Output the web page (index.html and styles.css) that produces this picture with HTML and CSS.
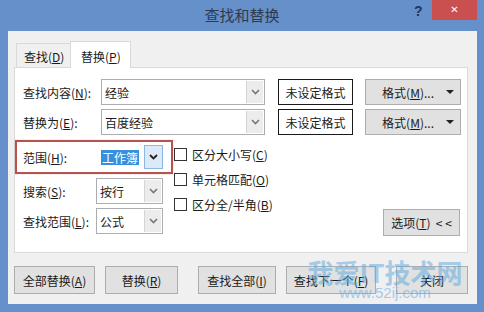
FILE: index.html
```html
<!DOCTYPE html>
<html>
<head>
<meta charset="utf-8" />
<title>查找和替换</title>
<link rel="stylesheet" href="styles.css">
</head>
<body>
<div id="win">

<div class="titlebar">
  <span class="title">查找和替换</span>
  <span class="help">?</span>
  <span class="close">&#x2715;</span>
</div>

<div class="dlg">

  <div class="tabs">
    <div class="tab">查找(<u>D</u>)</div>
    <div class="tab tab_on">替换(<u>P</u>)</div>
  </div>

  <div class="panel">
    <div class="row">
      <span class="lbl">查找内容(<u>N</u>):</span>
      <div class="combo combo_wide"><span class="val">经验</span><span class="arr"><svg width="9" height="6" viewBox="0 0 9 6"><path d="M1 1 L4.5 4.5 L8 1" fill="none" stroke="#777" stroke-width="1.6"/></svg></span></div>
      <div class="fmt_box">未设定格式</div>
      <div class="btn fmt_btn">格式(<u>M</u>)... <span class="tri"></span></div>
    </div>
    <div class="row">
      <span class="lbl">替换为(<u>E</u>):</span>
      <div class="combo combo_wide"><span class="val">百度经验</span><span class="arr"><svg width="9" height="6" viewBox="0 0 9 6"><path d="M1 1 L4.5 4.5 L8 1" fill="none" stroke="#777" stroke-width="1.6"/></svg></span></div>
      <div class="fmt_box">未设定格式</div>
      <div class="btn fmt_btn">格式(<u>M</u>)... <span class="tri"></span></div>
    </div>

    <div class="lower">
      <div class="opts_left">
        <div class="mark">
          <span class="lbl2">范围(<u>H</u>):</span>
          <div class="combo combo_small"><span class="val"><span class="sel">工作簿</span></span><span class="arr arr_hot"><svg width="9" height="6" viewBox="0 0 9 6"><path d="M1 1 L4.5 4.5 L8 1" fill="none" stroke="#222" stroke-width="1.8"/></svg></span></div>
        </div>
        <div class="row2">
          <span class="lbl2">搜索(<u>S</u>):</span>
          <div class="combo combo_small"><span class="val">按行</span><span class="arr"><svg width="9" height="6" viewBox="0 0 9 6"><path d="M1 1 L4.5 4.5 L8 1" fill="none" stroke="#777" stroke-width="1.6"/></svg></span></div>
        </div>
        <div class="row2">
          <span class="lbl2">查找范围(<u>L</u>):</span>
          <div class="combo combo_small"><span class="val">公式</span><span class="arr"><svg width="9" height="6" viewBox="0 0 9 6"><path d="M1 1 L4.5 4.5 L8 1" fill="none" stroke="#777" stroke-width="1.6"/></svg></span></div>
        </div>
      </div>
      <div class="checks">
        <div class="chk"><span class="box"></span>区分大小写(<u>C</u>)</div>
        <div class="chk"><span class="box"></span>单元格匹配(<u>O</u>)</div>
        <div class="chk"><span class="box"></span>区分全/半角(<u>B</u>)</div>
      </div>
      <div class="btn opt_btn">选项(<u>T</u>)&nbsp; &lt; &lt;</div>
    </div>
  </div>

  <div class="bottom">
    <div class="btn b_all">全部替换(<u>A</u>)</div>
    <div class="btn b_rep">替换(<u>R</u>)</div>
    <div class="btn b_findall">查找全部(<u>I</u>)</div>
    <div class="btn b_next">查找下一个(<u>F</u>)</div>
    <div class="btn b_close">关闭</div>
  </div>

</div><!--dlg end-->

<div class="wm">
  <div class="wm_big">我爱IT技术网</div>
  <div class="wm_small">www.52ij.com</div>
</div>

</div><!--win end-->
</body>
</html>
```

FILE: styles.css
```css
body{
	margin:0;
	font-family:"Noto Sans CJK SC", sans-serif;
	font-size:12px;
	color:#1a1a1a;
}
#win{
	position:relative;
	width:484px;
	height:312px;
	background-color:#6690c9;
	overflow:hidden;
}
.titlebar{
	height:31px;
	position:relative;
}
.title{
	position:absolute;
	left:0;
	right:0;
	top:4px;
	text-align:center;
	font-size:15px;
	color:#2e3a4e;
}
.help{
	position:absolute;
	left:414px;
	top:3px;
	font-family:"Liberation Sans", sans-serif;
	font-weight:bold;
	font-size:14px;
	color:#1d3561;
}
.close{
	position:absolute;
	left:432px;
	top:0;
	width:45px;
	height:20px;
	background-color:#c9504e;
	color:#fff;
	font-size:10px;
	line-height:20px;
	text-align:center;
	font-family:"DejaVu Sans", sans-serif;
}
.dlg{
	margin-left:8px;
	width:469px;
	height:273px;
	background-color:#f0f0f0;
	padding-top:9px;
	box-sizing:border-box;
}
.tabs{
	display:flex;
	align-items:flex-end;
	height:27px;
	margin-left:8px;
}
.tab{
	height:24px;
	width:55px;
	border:1px solid #d9d9d9;
	border-bottom:none;
	background-color:#f0f0f0;
	display:flex;
	align-items:center;
	padding-left:7px;
	box-sizing:border-box;
	padding-top:2px;
}
.tab_on{
	height:27px;
	width:61px;
	background-color:#fff;
	margin-left:-1px;
	padding-left:10px;
	margin-bottom:-1px;
	position:relative;
}
.panel{
	margin-left:6px;
	width:454px;
	height:186px;
	background-color:#fff;
	border:1px solid #d9d9d9;
	box-sizing:border-box;
	padding-top:11px;
}
.row{
	display:flex;
	align-items:center;
	height:26px;
	margin-bottom:4px;
}
.lbl{
	width:78px;
	padding-left:8px;
}
.combo{
	display:flex;
	height:26px;
	border:1px solid #abadb3;
	box-sizing:border-box;
	background-color:#fff;
}
.combo .val{
	flex:1;
	display:flex;
	align-items:center;
	padding-left:3px;
}
.arr{
	width:16px;
	border-left:1px solid #d5d5d5;
	background-color:#ececec;
	display:flex;
	align-items:center;
	justify-content:center;
	margin:1px;
}
.arr_hot{
	background-color:#dce9f7;
	border:1px solid #8cb6e3;
	margin:0;
	width:17px;
}
.combo_wide{
	width:164px;
}
.fmt_box{
	width:75px;
	height:26px;
	margin-left:13px;
	border:1px solid #1a1a1a;
	box-sizing:border-box;
	display:flex;
	align-items:center;
	justify-content:center;
}
.btn{
	background-color:#e1e1e1;
	border:1px solid #adadad;
	box-sizing:border-box;
	display:flex;
	align-items:center;
	justify-content:center;
}
.fmt_btn{
	width:96px;
	height:26px;
	margin-left:12px;
	justify-content:flex-end;
	padding-right:6px;
}
.tri{
	display:inline-block;
	width:0;
	height:0;
	border-left:4px solid transparent;
	border-right:4px solid transparent;
	border-top:4px solid #222;
	margin-left:12px;
}
.lower{
	display:flex;
	margin-top:5px;
}
.opts_left{
	width:158px;
}
.mark{
	display:flex;
	align-items:center;
	height:34px;
	border:2px solid #b8524f;
	box-sizing:border-box;
	padding-left:6px;
	box-shadow:0 0 1px #d99;
}
.lbl2{
	width:74px;
}
.combo_small{
	width:67px;
}
.mark .combo_small{
	border-color:#fff;
}
.sel{
	background-color:#3590e0;
	color:#fff;
	padding:0 1px;
	line-height:15px;
}
.row2{
	display:flex;
	align-items:center;
	height:26px;
	margin-top:4px;
	padding-left:8px;
}
.row2 .combo_small{
	margin-left:-1px;
}
.checks{
	margin-left:1px;
	padding-top:8px;
}
.chk{
	display:flex;
	align-items:center;
	height:13px;
	margin-bottom:12px;
}
.box{
	width:13px;
	height:13px;
	border:1px solid #333;
	box-sizing:border-box;
	background-color:#fff;
	margin-right:5px;
}
.opt_btn{
	width:77px;
	height:27px;
	margin-left:auto;
	margin-right:7px;
	align-self:flex-end;
	margin-bottom:-2px;
}
.bottom{
	display:flex;
	margin-left:6px;
	margin-top:13px;
}
.bottom .btn{
	height:28px;
}
.b_all{ width:81px; }
.b_rep{ width:73px; margin-left:10px; }
.b_findall{ width:78px; margin-left:20px; }
.b_next{ width:90px; margin-left:10px; }
.b_close{ width:72px; margin-left:20px; }
.wm{
	position:absolute;
	left:300px;
	top:258px;
	width:170px;
	text-align:center;
	color:#5aa8e0;
	opacity:0.5;
}
.wm_big{
	font-size:26px;
	font-weight:bold;
	line-height:28px;
}
.wm_small{
	font-family:"Liberation Sans", sans-serif;
	font-size:15px;
	line-height:15px;
	margin-top:-1px;
}
```
